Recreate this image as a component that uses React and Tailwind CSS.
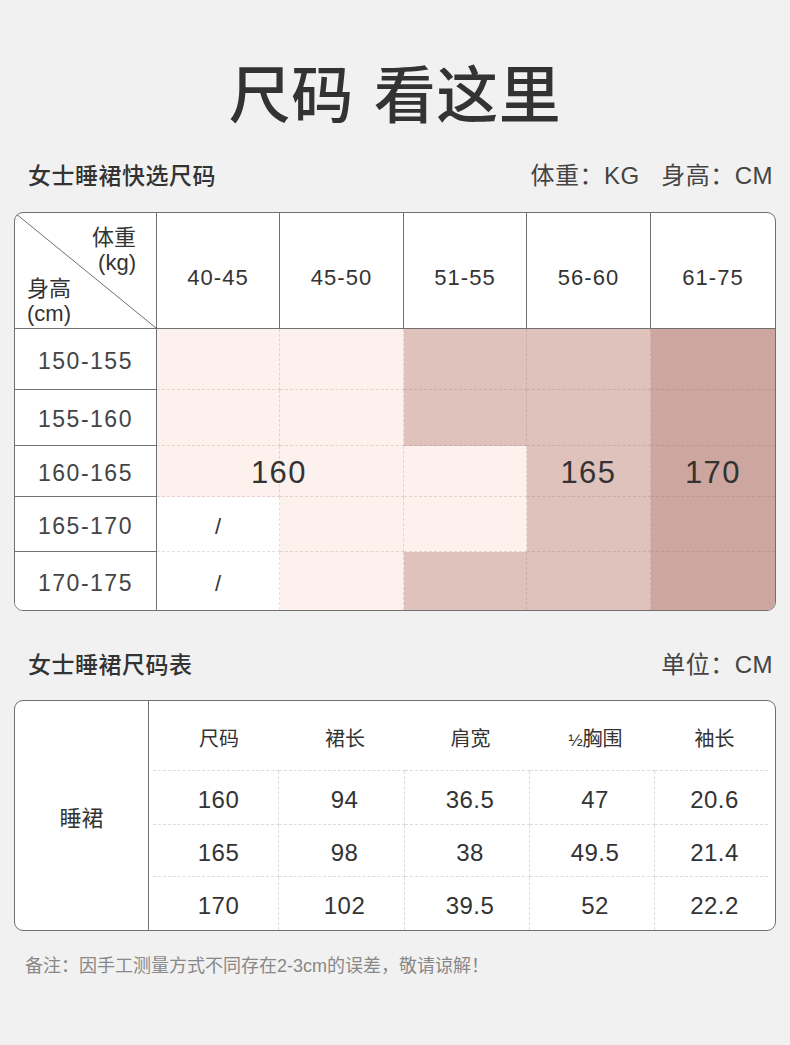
import React from 'react';

const FONT = "font-['Liberation_Sans','Noto_Sans_CJK_SC',sans-serif]";

const CELL_BG = {
  W: 'bg-white',
  L: 'bg-[#fcf1ed]',
  M: 'bg-[#dfc2bb]',
  D: 'bg-[#cca69f]',
};

const quickRows = [
  { label: '150-155', cells: ['L', 'L', 'M', 'M', 'D'], texts: {} },
  { label: '155-160', cells: ['L', 'L', 'M', 'M', 'D'], texts: {} },
  { label: '160-165', cells: ['L', 'L', 'L', 'M', 'D'], texts: { 3: '165', 4: '170' }, span: '160' },
  { label: '165-170', cells: ['W', 'L', 'L', 'M', 'D'], texts: { 0: '/' } },
  { label: '170-175', cells: ['W', 'L', 'M', 'M', 'D'], texts: { 0: '/' } },
];

const weights = ['40-45', '45-50', '51-55', '56-60', '61-75'];

const sizeHeads = ['尺码', '裙长', '肩宽', '½胸围', '袖长'];
const sizeRows = [
  ['160', '94', '36.5', '47', '20.6'],
  ['165', '98', '38', '49.5', '21.4'],
  ['170', '102', '39.5', '52', '22.2'],
];

const SectionHead = ({ title, right }) => (
  <div className="h-[40px] flex items-center justify-between pl-[28px] pr-[17px]">
    <h2 className="text-[23px] font-medium text-[#333] tracking-[0.5px]">{title}</h2>
    <div className="text-[24px] text-[#444] tracking-[0.5px]">{right}</div>
  </div>
);

const QuickTable = () => {
  return (
    <div className="mx-[14px] border border-[#707070] rounded-[9px] overflow-hidden bg-white">
      <div className="grid grid-cols-[142px_123px_124px_123px_124px_1fr] grid-rows-[116px_61px_56px_51px_55px_58px]">
        {/* Header: diagonal cell */}
        <div className="relative border-r border-b border-[#707070] text-[22px] text-[#333] leading-[25px]">
          <svg className="absolute inset-0 w-full h-full" preserveAspectRatio="none" viewBox="0 0 100 100">
            <line x1="0" y1="0" x2="100" y2="100" stroke="#707070" strokeWidth="1" vectorEffect="non-scaling-stroke" />
          </svg>
          <div className="absolute right-[20px] top-[12px] text-right">
            <div>体重</div>
            <div>(kg)</div>
          </div>
          <div className="absolute left-[12px] bottom-[2px]">
            <div>身高</div>
            <div>(cm)</div>
          </div>
        </div>
        {weights.map((w, i) => (
          <div
            key={w}
            className={`flex items-center justify-center pt-[14px] border-b border-[#707070] text-[22px] text-[#333] tracking-[1px] ${i < 4 ? 'border-r' : ''}`}
          >
            {w}
          </div>
        ))}

        {quickRows.map((row, r) => (
          <React.Fragment key={row.label}>
            <div
              className={`flex items-center justify-center pt-[4px] border-r border-[#707070] text-[23px] text-[#444] tracking-[1.5px] bg-white ${r < 4 ? 'border-b' : ''}`}
            >
              {row.label}
            </div>
            {row.cells.map((c, i) => (
              <div
                key={i}
                className={`relative flex items-center justify-center pt-[4px] border-dashed border-[#8a5a50]/20 ${CELL_BG[c]} ${i < 4 ? 'border-r' : ''} ${r < 4 ? 'border-b' : ''}`}
              >
                {row.texts[i] && (
                  <span className={row.texts[i] === '/' ? 'text-[22px] text-[#333]' : 'text-[31px] text-[#333] tracking-[1.5px]'}>
                    {row.texts[i]}
                  </span>
                )}
                {row.span && i === 0 && (
                  <span className="absolute z-10 right-0 translate-x-1/2 text-[31px] text-[#333] tracking-[1.5px]">
                    {row.span}
                  </span>
                )}
              </div>
            ))}
          </React.Fragment>
        ))}
      </div>
    </div>
  );
};

const SizeTable = () => {
  return (
    <div className="mx-[14px] border border-[#707070] rounded-[9px] overflow-hidden bg-white flex">
      <div className="w-[134px] shrink-0 border-r border-[#707070] flex items-center justify-center text-[22px] text-[#333] pt-[6px]">
        睡裙
      </div>
      <div className="flex-1 pl-[4px] pr-[7px]">
        <div className="grid grid-cols-[126px_126px_125px_125px_1fr] grid-rows-[70px_54px_52px_53px]">
          {sizeHeads.map((h) => (
            <div key={h} className="flex items-center justify-center pt-[6px] text-[20px] text-[#333] border-b border-dashed border-[#dcdcdc] pl-[6px]">
              {h === '½胸围' ? (
                <span>
                  <span className="text-[17px]">½</span>胸围
                </span>
              ) : (
                h
              )}
            </div>
          ))}
          {sizeRows.map((row, r) =>
            row.map((v, i) => (
              <div
                key={`${r}-${i}`}
                className={`flex items-center justify-center pt-[4px] text-[24px] text-[#333] tracking-[0.5px] border-dashed border-[#dcdcdc] pl-[6px] ${i < 4 ? 'border-r' : ''} ${r < 2 ? 'border-b' : ''}`}
              >
                {v}
              </div>
            ))
          )}
        </div>
      </div>
    </div>
  );
};

export default function App() {
  return (
    <div className={`${FONT} bg-[#f1f1f1] w-full min-h-[1045px] pb-[60px]`}>
      {/* Title */}
      <div className="pt-[66px] h-[128px] flex justify-center">
        <h1 className="text-[62px] leading-[62px] font-medium text-[#333] flex gap-[20px] tracking-[0.5px]">
          <span>尺码</span>
          <span>看这里</span>
        </h1>
      </div>

      <div className="mt-[28px]">
        <SectionHead title="女士睡裙快选尺码" right={<span>体重：KG&nbsp;&nbsp;&nbsp;身高：CM</span>} />
      </div>

      <div className="mt-[16px]">
        <QuickTable />
      </div>

      <div className="mt-[34px]">
        <SectionHead title="女士睡裙尺码表" right="单位：CM" />
      </div>

      <div className="mt-[15px]">
        <SizeTable />
      </div>

      <p className="mt-[25px] h-[20px] leading-[20px] pl-[25px] text-[18px] text-[#888]">
        备注：因手工测量方式不同存在2-3cm的误差，敬请谅解！
      </p>
    </div>
  );
}
